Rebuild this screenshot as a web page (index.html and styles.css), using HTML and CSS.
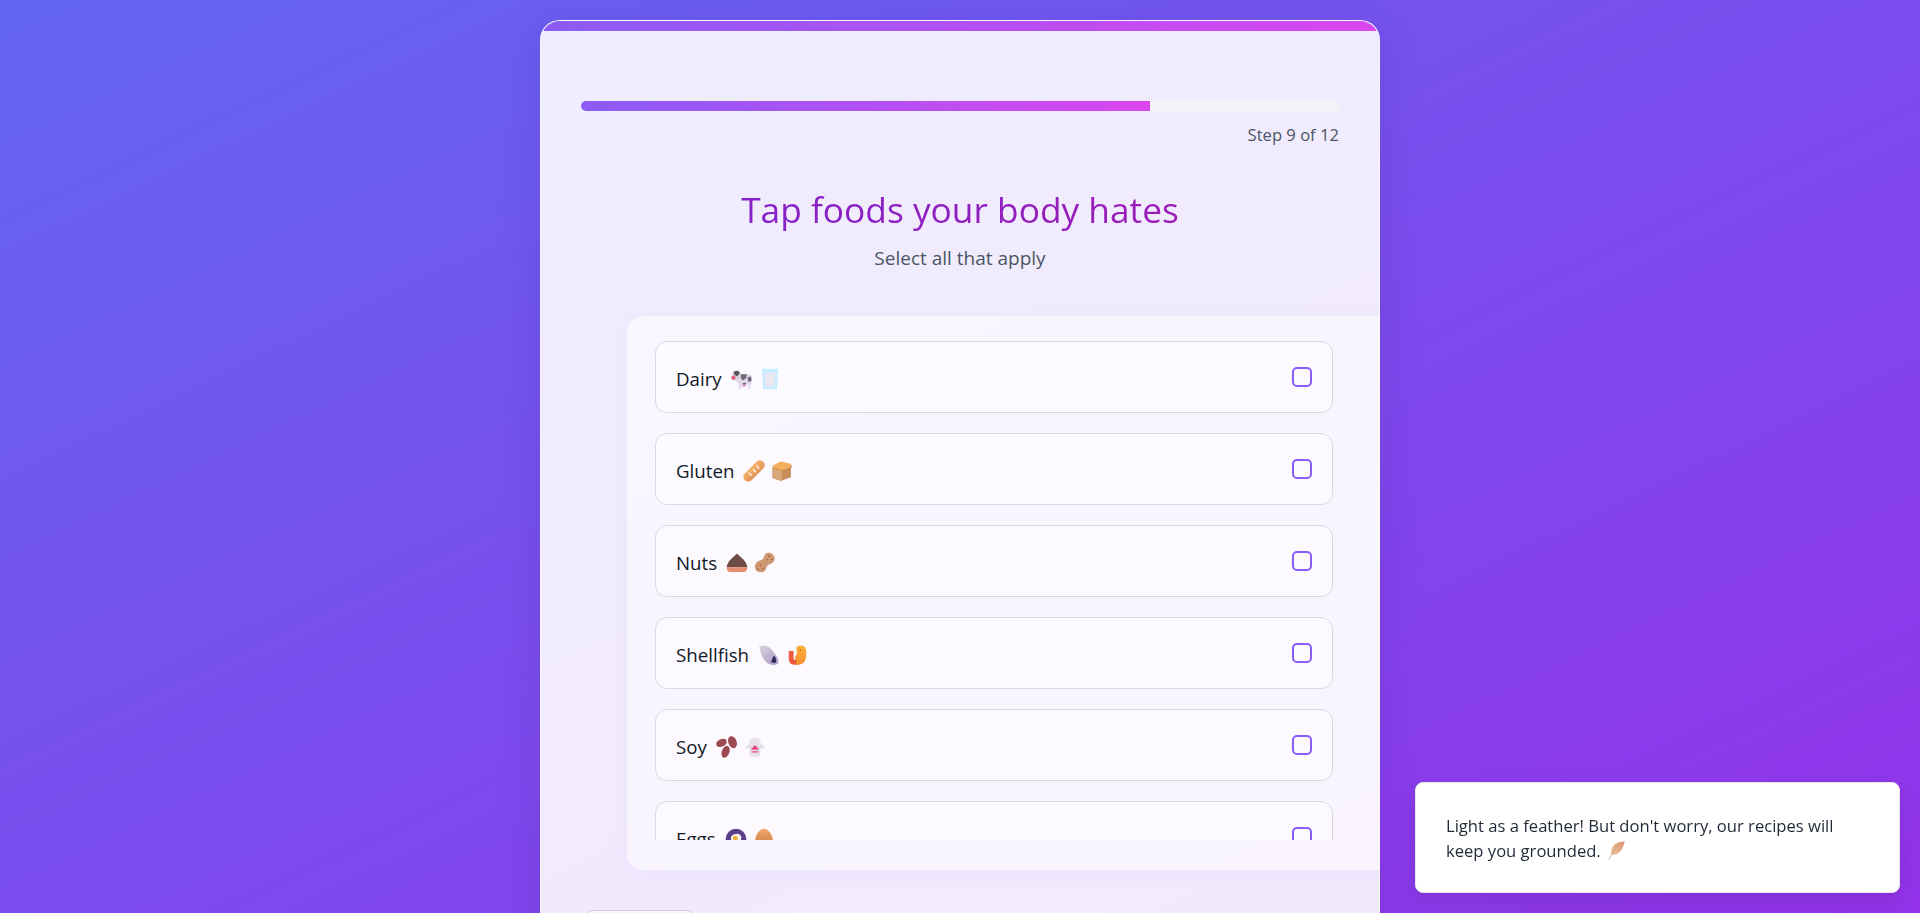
FILE: index.html
```html
<!DOCTYPE html>
<html>
<head>
<meta charset="utf-8">
<title>Tap foods your body hates</title>
<link rel="stylesheet" href="styles.css">
</head>
<body>
<svg class="sprites" xmlns="http://www.w3.org/2000/svg">
	<defs>
		<linearGradient id="g-crust" x1="0" y1="0" x2="0" y2="1"><stop offset="0" stop-color="#f7b267"/><stop offset="1" stop-color="#e0925a"/></linearGradient>
		<linearGradient id="g-egg" x1="0" y1="0" x2="0" y2="1"><stop offset="0" stop-color="#f0a868"/><stop offset="1" stop-color="#c9773f"/></linearGradient>
		<linearGradient id="g-feather" x1="1" y1="0" x2="0" y2="1"><stop offset="0" stop-color="#d9906a"/><stop offset="1" stop-color="#ecc4a4"/></linearGradient>
		<linearGradient id="g-shell" x1="0" y1="0" x2="1" y2="1"><stop offset="0" stop-color="#d8d6dc"/><stop offset="1" stop-color="#a897c8"/></linearGradient>
		<linearGradient id="g-shrimp" x1="0" y1="0" x2="0" y2="1"><stop offset="0" stop-color="#fbb03b"/><stop offset="1" stop-color="#f7902e"/></linearGradient>
		<symbol id="cow" viewBox="0 0 32 32">
			<path d="M9 9h17c3 0 4 3 4 6v9h-2v6h-3v-6H15v6h-4v-7l-3-3z" fill="#e2d8ee"/>
			<path d="M14 9h9l-1 6-5 3-3-4zM24 14l5-2 1 7-5 1zM17 22l4-1 1 3h-5z" fill="#6f6a74"/>
			<path d="M2 6l3-2 5 0 4 3v6l-4 5H5l-3-5z" fill="#d7d0dc"/>
			<path d="M4 5l6-1 3 3-4 5-4-2z" fill="#56515c"/>
			<circle cx="3.500" cy="14" r="3.200" fill="#e0607a"/>
			<path d="M16 24h6l-1 3h-4z" fill="#d985c0"/>
		</symbol>
		<symbol id="glass" viewBox="0 0 32 32">
			<path d="M4 1h24l-2 30H6z" fill="#c6ecff"/>
			<path d="M8 6h16l-1.600 21H9.600z" fill="#e9e6f1"/>
		</symbol>
		<symbol id="baguette" viewBox="0 0 32 32">
			<rect x="-3" y="9" width="38" height="14" rx="7" transform="rotate(-45 16 16)" fill="url(#g-crust)"/>
			<path d="M9 19l3 3M15 14l3 3M20 9l3 3" stroke="#fdeedd" stroke-width="2.400" stroke-linecap="round"/>
		</symbol>
		<symbol id="bread" viewBox="0 0 32 32">
			<path d="M2 11l14-8 12 3c3 1 3 5 1 6v13l-14 5-13-4z" fill="#c98f5a"/>
			<path d="M2 10c0-3 4-3 6-5l6-3 13 3c3 1 3 5 0 6l-11 4z" fill="#f4b05e"/>
			<path d="M3 12l13 4v15l-13-4z" fill="#d9a878"/>
		</symbol>
		<symbol id="chestnut" viewBox="0 0 32 32">
			<path d="M16 2c3 4 14 10 15 20H1C2 12 13 6 16 2z" fill="#6f4b45"/>
			<path d="M1 22h30c0 4-2 7-5 7H6c-3 0-5-3-5-7z" fill="#e58d73"/>
		</symbol>
		<symbol id="peanut" viewBox="0 0 32 32">
			<path d="M21 1c6 0 10 5 9 10-1 4-4 6-8 7-2 1-3 2-4 5-1 5-6 8-11 6-5-1-7-7-5-11 1-4 5-5 8-6 2-1 3-2 4-4 1-4 3-7 7-7z" fill="#cf9870"/>
			<g fill="#9a5a3f"><circle cx="22" cy="6" r="1.200"/><circle cx="26" cy="11" r="1.200"/><circle cx="19" cy="11" r="1"/><circle cx="9" cy="19" r="1.200"/><circle cx="13" cy="24" r="1.200"/><circle cx="6" cy="25" r="1"/></g>
		</symbol>
		<symbol id="shell" viewBox="0 0 32 32">
			<path d="M2 3c9-3 17 2 23 12 3 4 6 9 4 13-2 3-8 3-13 1C8 26 3 14 2 3z" fill="url(#g-shell)"/>
			<path d="M23 17c3 2 4 6 3 10-3 1-6 0-7-2 2-2 2-5 4-8z" fill="#2d2a55"/>
		</symbol>
		<symbol id="shrimp" viewBox="0 0 32 32">
			<path d="M4 10v12c0 5 4 8 8 8h5v-7h-4c-1 0-2-1-2-2V10z" fill="#ee5a40"/>
			<path d="M15 5c2-3 8-4 12-1 3 3 3 9 2 15 0 6-4 11-11 11h-3v-7c-3 0-2-5 0-7 2-3 0-7 0-11z" fill="url(#g-shrimp)"/>
			<circle cx="21" cy="9" r="1.200" fill="#c25a1a"/>
		</symbol>
		<symbol id="beans" viewBox="0 0 32 32">
			<g fill="#9a4a50"><ellipse cx="8" cy="10" rx="8" ry="5.500" transform="rotate(-25 8 10)"/><ellipse cx="24" cy="9" rx="6" ry="9" transform="rotate(-20 24 9)"/><ellipse cx="14" cy="23" rx="5.500" ry="9" transform="rotate(20 14 23)"/></g>
		</symbol>
		<symbol id="tofu" viewBox="0 0 32 32">
			<path d="M8 8c0-4 4-6 8-6s8 2 8 6v18c0 3-2 4-8 4s-8-1-8-4z" fill="#e6e2e8"/>
			<path d="M8 11l-7 7 7-1zM24 11l7 7-7-1z" fill="#dcd8e0"/>
			<path d="M14 14h4l1 3h2v3H11v-3h2zM11 22h10v2H11z" fill="#e84a7f"/>
		</symbol>
		<symbol id="friedegg" viewBox="0 0 32 32">
			<circle cx="16" cy="16" r="15" fill="#5b3d8a"/>
			<path d="M10 11c3-3 10-4 12-1 3 2 2 8-1 10-3 3-9 2-11-1-2-2-2-6 0-8z" fill="#f7f3ef"/>
			<circle cx="15" cy="15" r="3.500" fill="#f8a832"/>
		</symbol>
		<symbol id="egg" viewBox="0 0 32 32">
			<path d="M16 1c7 0 13 10 13 18 0 7-6 12-13 12S3 26 3 19C3 11 9 1 16 1z" fill="url(#g-egg)"/>
		</symbol>
		<symbol id="feather" viewBox="0 0 32 32">
			<path d="M30 1c-9 0-17 3-21 10-2 4-3 9-2 13 7 0 14-3 18-10 2-4 4-9 5-13z" fill="url(#g-feather)"/>
			<path d="M24 5C16 10 10 18 3 31" stroke="#d9a888" stroke-width="1.500" fill="none"/>
		</symbol>
	</defs>
</svg>

<div class="card">
	<div class="progress"><div class="progress-fill" style="width: 75%"></div></div>
	<p class="step">Step 9 of 12</p>
	<h1 class="title">Tap foods your body hates</h1>
	<p class="subtitle">Select all that apply</p>

	<div class="panel">
		<div class="options">
			<div class="option">
				<span class="label">Dairy <svg class="emoji"><use href="#cow"/></svg><svg class="emoji"><use href="#glass"/></svg></span>
				<span class="check"></span>
			</div>
			<div class="option">
				<span class="label">Gluten <svg class="emoji"><use href="#baguette"/></svg><svg class="emoji"><use href="#bread"/></svg></span>
				<span class="check"></span>
			</div>
			<div class="option">
				<span class="label">Nuts <svg class="emoji"><use href="#chestnut"/></svg><svg class="emoji"><use href="#peanut"/></svg></span>
				<span class="check"></span>
			</div>
			<div class="option">
				<span class="label">Shellfish <svg class="emoji"><use href="#shell"/></svg><svg class="emoji"><use href="#shrimp"/></svg></span>
				<span class="check"></span>
			</div>
			<div class="option">
				<span class="label">Soy <svg class="emoji"><use href="#beans"/></svg><svg class="emoji"><use href="#tofu"/></svg></span>
				<span class="check"></span>
			</div>
			<div class="option">
				<span class="label">Eggs <svg class="emoji"><use href="#friedegg"/></svg><svg class="emoji"><use href="#egg"/></svg></span>
				<span class="check"></span>
			</div>
		</div>
	</div>

	<div class="nav">
		<button class="back" aria-label="Back"></button>
	</div>
</div>

<div class="toast">Light as a feather! But don't worry, our recipes will keep you grounded. <svg class="emoji emoji-small"><use href="#feather"/></svg></div>
</body>
</html>
```

FILE: styles.css
```css
html, body {
  height: 913px;
  margin: 0;
  overflow: hidden;
}

body {
  background: linear-gradient(to bottom right, #6366f1 0%, #9333ea 100%);
  color: #1f2937;
  font-family: "Open Sans", "Noto Sans", sans-serif;
  padding-top: 20px;
  box-sizing: border-box;
}

.sprites {
  position: absolute;
  width: 0;
  height: 0;
}

.card {
  position: relative;
  width: 840px;
  margin: 0 auto;
  padding: 80px 40px 40px;
  box-sizing: border-box;
  background: rgba(255, 255, 255, 0.89);
  border: 1px solid rgba(255, 255, 255, 0.6);
  border-radius: 20px;
  box-shadow: 0 10px 40px rgba(50, 20, 120, 0.15);
  overflow: hidden;
}

.card::before {
  content: "";
  position: absolute;
  top: 0;
  left: 0;
  right: 0;
  height: 10px;
  background: linear-gradient(90deg, #8b5cf6, #d946ef);
}

.progress {
  height: 10px;
  background: #f3f4f6;
  border-radius: 5px;
  overflow: hidden;
}

.progress-fill {
  height: 100%;
  background: linear-gradient(90deg, #8b5cf6, #d946ef);
}

.step {
  margin: 12px 0 0;
  font-size: 16.600px;
  line-height: 24px;
  text-align: right;
  color: #4b5563;
}

.title {
  margin: 38px 0 0;
  font-size: 35.300px;
  font-weight: 400;
  line-height: 48px;
  text-align: center;
  background: linear-gradient(90deg, #7e22ce, #a21caf);
  -webkit-background-clip: text;
  background-clip: text;
  color: transparent;
}

.subtitle {
  margin: 11px 0 0;
  font-size: 19px;
  line-height: 28px;
  text-align: center;
  color: #4b5563;
}

.panel {
  margin: 44px -60px 0 46px;
  padding: 25px 66px 30px 28px;
  background: rgba(255, 255, 255, 0.5);
  border-radius: 16px;
  box-shadow: 0 4px 20px rgba(139, 92, 246, 0.05);
}

.options {
  height: 499px;
  overflow: hidden;
  display: flex;
  flex-direction: column;
  gap: 20px;
}

.option {
  flex: none;
  height: 72px;
  padding: 0 20px;
  box-sizing: border-box;
  display: flex;
  align-items: center;
  justify-content: space-between;
  background: rgba(255, 255, 255, 0.5);
  border: 1px solid #dcd5e6;
  border-radius: 12px;
}

.label {
  display: flex;
  align-items: center;
  gap: 6px;
  font-size: 18.700px;
  line-height: 28px;
  color: #111827;
  padding-top: 3px;
}

.emoji {
  width: 22px;
  height: 22px;
  flex: none;
}

.label .emoji:first-of-type {
  margin-left: 3px;
}

.emoji-small {
  width: 19px;
  height: 19px;
  margin-left: 2px;
  vertical-align: -3px;
}

.check {
  width: 20px;
  height: 20px;
  box-sizing: border-box;
  border: 2px solid #8b5cf6;
  border-radius: 5px;
}

.nav {
  margin-top: 40px;
}

.back {
  display: block;
  width: 114px;
  height: 48px;
  margin-left: 2px;
  background: rgba(255, 255, 255, 0.5);
  border: 1px solid #d5cfe0;
  border-radius: 10px;
}

.toast {
  position: fixed;
  right: 20px;
  bottom: 20px;
  width: 485px;
  height: 111px;
  box-sizing: border-box;
  padding: 30px;
  background: #fff;
  border: 1px solid #e5e7eb;
  border-radius: 8px;
  box-shadow: 0 10px 25px rgba(0, 0, 0, 0.1);
  font-size: 16.600px;
  line-height: 25px;
  color: #1f2937;
}
```
